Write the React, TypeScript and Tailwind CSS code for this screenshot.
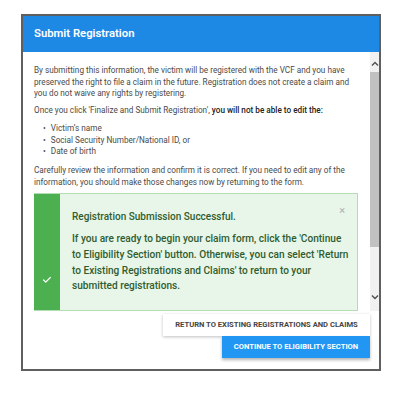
import { Check } from "lucide-react";

const items = ["Victim\u2019s name", "Social Security Number/National ID, or", "Date of birth"];

function ScrollBar() {
  return (
    <div className="flex w-[9px] flex-col items-center bg-[#f1f1f1]">
      <svg width="8" height="6" viewBox="0 0 8 6" className="mt-[9px]">
        <path d="M1 4.5 L4 1.5 L7 4.5" fill="none" stroke="#505050" strokeWidth="1.4" />
      </svg>
      <div className="mt-[5px] h-[175px] w-full bg-[#c1c1c1]" />
      <svg width="8" height="6" viewBox="0 0 8 6" className="mt-[47px]">
        <path d="M1 1.5 L4 4.5 L7 1.5" fill="none" stroke="#505050" strokeWidth="1.4" />
      </svg>
    </div>
  );
}

export default function App() {
  return (
    <div className="h-[393px] w-[403px] bg-white pl-[21px] pt-[14px] font-['Roboto',sans-serif]">
      <div className="flex h-[357px] w-[360px] flex-col border-2 border-[#5f5f5f] bg-white">
        <div className="flex h-[36px] items-center bg-[#1e88e5] pl-[11px] text-[11.3px] font-semibold text-white">
          Submit Registration
        </div>

        <div className="flex h-[259px]">
          <div className="flex-1 overflow-hidden pl-[11px] pr-[12px] pt-[13px] text-[8.2px] leading-[11.7px] text-[#4a4a4a]">
            <p>
              By submitting this information, the victim will be registered with the VCF and you have preserved the
              right to file a claim in the future. Registration does not create a claim and you do not waive any
              rights by registering.
            </p>
            <p className="mt-[5px]">
              Once you click 'Finalize and Submit Registration', <b className="font-medium text-[#222]">you will not be able to edit the:</b>
            </p>
            <ul className="mt-[6px] pl-[9px]">
              {items.map((item) => (
                <li key={item} className="flex gap-[5px]">
                  <span>•</span>
                  <span>{item}</span>
                </li>
              ))}
            </ul>
            <p className="mt-[7px]">
              Carefully review the information and confirm it is correct. If you need to edit any of the information,
              you should make those changes now by returning to the form.
            </p>

            <div className="mt-[5px] flex border border-l-0 border-[#b5dcb5] bg-[#e8f5e9]">
              <div className="flex w-[26px] shrink-0 justify-center bg-[#4caf50] pt-[81px]">
                <Check size={10} strokeWidth={3} className="text-white" />
              </div>
              <div className="relative flex-1 pb-[16px] pl-[12px] pr-[6px] pt-[15px] text-[#2f5d30]">
                <span className="absolute right-[12px] top-[11px] text-[11px] leading-none text-[#b0b0b0]">×</span>
                <div className="text-[10px] font-medium leading-[16px]">Registration Submission Successful.</div>
                <div className="mt-[6px] text-[10.1px] font-medium leading-[15.7px]">
                  If you are ready to begin your claim form, click the 'Continue to Eligibility Section' button.
                  Otherwise, you can select 'Return to Existing Registrations and Claims' to return to your submitted
                  registrations.
                </div>
              </div>
            </div>
          </div>
          <ScrollBar />
        </div>

        <div className="flex flex-col items-end pr-[9px] pt-[3px]">
          <button className="flex h-[22px] w-[207px] items-center justify-center bg-white text-[7.6px] font-bold text-[#444] shadow-[0_1px_3px_rgba(0,0,0,0.25)]">
            RETURN TO EXISTING REGISTRATIONS AND CLAIMS
          </button>
          <button className="flex h-[22px] w-[148px] items-center justify-center bg-[#2196f3] text-[7.6px] font-bold text-white shadow-[0_2px_3px_rgba(0,0,0,0.3)]">
            CONTINUE TO ELIGIBILITY SECTION
          </button>
        </div>
      </div>
    </div>
  );
}
